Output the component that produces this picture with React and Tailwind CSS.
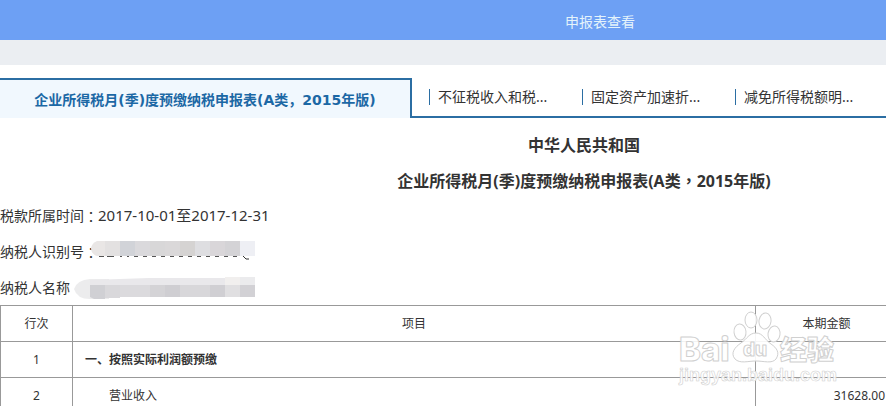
const OTHER_TABS = ['不征税收入和税...', '固定资产加速折...', '减免所得税额明...']

const ROWS = [
  { no: 1, item: '一、按照实际利润额预缴', amount: '', section: true },
  { no: 2, item: '营业收入', amount: '31628.00', section: false },
]

// full-width punctuation centred in its cell
function Mark({ children }) {
  return <span className="font-['Noto_Sans_CJK_TC',sans-serif]">{children}</span>
}

function MaskedNumber() {
  return (
    <svg viewBox="0 0 166 22" className="-ml-2 h-[22px] w-[166px]" role="img" aria-label="已隐藏">
      <path d="M7 0H16V15H7Q1 13 1 7Q2 2 7 0Z" fill="#e9e6e5" />
      <rect x="15" y="0" width="15" height="15" fill="#e3e1e1" />
      <rect x="30" y="0" width="15" height="15" fill="#d1d3d8" />
      <rect x="45" y="0" width="15" height="15" fill="#dad9dc" />
      <rect x="60" y="0" width="15" height="15" fill="#d8d7d8" />
      <rect x="75" y="0" width="15" height="15" fill="#dad8d9" />
      <rect x="90" y="0" width="15" height="15" fill="#d5d3d2" />
      <rect x="105" y="0" width="15" height="15" fill="#dedee1" />
      <rect x="120" y="0" width="15" height="15" fill="#d9d6d9" />
      <rect x="135" y="0" width="15" height="15" fill="#d4d3d6" />
      <rect x="150" y="0" width="15" height="15" fill="#eeeff4" />
      <path d="M9 15.500H14M17 15.500H24M30 15.500H32M37 15.500H39" stroke="#555" />
      <path d="M44 15.500H150" stroke="#555" strokeDasharray="4 5" />
      <path d="M153 15L156 18H159" fill="none" stroke="#333" />
    </svg>
  )
}

function MaskedName() {
  return (
    <svg viewBox="0 0 182 22" className="ml-1 h-[22px] w-[182px]" role="img" aria-label="已隐藏">
      <path d="M16 2H35V22H16Q3 22 0 12Q3 3 16 2Z" fill="#ececed" />
      <path d="M16 3L75 1H151V9H16Z" fill="#e9e8eb" />
      <rect x="151" y="0" width="15" height="9" fill="#f1efee" />
      <rect x="166" y="0" width="15" height="9" fill="#ebebed" />
      <path d="M16 8H31V22H20L16 20Z" fill="#d0d0d4" />
      <rect x="31" y="8" width="15" height="13" fill="#d9d8db" />
      <rect x="46" y="8" width="30" height="12" fill="#dbdadd" />
      <rect x="76" y="8" width="15" height="12" fill="#d4d3d6" />
      <rect x="91" y="8" width="15" height="12" fill="#cfced2" />
      <rect x="106" y="8" width="30" height="12" fill="#d8d7da" />
      <rect x="136" y="8" width="15" height="12" fill="#d0cfd3" />
      <rect x="151" y="8" width="15" height="12" fill="#e0dfe1" />
      <rect x="166" y="8" width="15" height="12" fill="#d2d1d5" />
    </svg>
  )
}

function Watermark() {
  return (
    <svg
      viewBox="0 0 166 84"
      className="pointer-events-none absolute top-[306px] left-[676px] h-[84px] w-[166px]"
      fill="#fff"
      fillOpacity="0.9"
      stroke="#d0d0d0"
      strokeWidth="1"
      strokeLinejoin="round"
      aria-hidden
    >
      <text x="3" y="55" fontSize="33" fontWeight="800" fontFamily="Inter">
        Bai
      </text>
      <ellipse cx="64" cy="26" rx="6" ry="8" transform="rotate(-6 64 26)" />
      <ellipse cx="75" cy="14" rx="6" ry="8" />
      <ellipse cx="89" cy="15" rx="6" ry="8" transform="rotate(8 89 15)" />
      <ellipse cx="98" cy="28" rx="6" ry="8" transform="rotate(8 98 28)" />
      <path d="M80 27C87 27 89 34 95 38C101 42 104 47 100 53C96 58 88 55 80 55C72 55 64 58 59 53C54 47 59 41 65 37C71 33 73 27 80 27Z" />
      <text x="67" y="50" fontSize="19" fontWeight="800" fontFamily="Inter">
        du
      </text>
      <text x="104" y="54" fontSize="27" fontWeight="900" fontFamily="Noto Sans CJK SC">
        经验
      </text>
      <text x="3" y="75" fontSize="18" fontWeight="700" fontFamily="Liberation Sans" strokeWidth="0.6">
        jingyan.baidu.com
      </text>
    </svg>
  )
}

export default function App() {
  return (
    <div className="relative h-screen overflow-hidden bg-white font-['Noto_Sans','Noto_Sans_CJK_SC',sans-serif] text-sm text-[#333]">
      <header className="flex h-10 min-w-[1200px] items-center justify-center bg-[#6da0f4] pt-1 text-[#e4f3fb]">
        <h1>申报表查看</h1>
      </header>
      <div className="h-[25px] bg-[#ebeef2]" />

      <main className="min-w-[1168px]">
        <nav className="mt-[13px] flex h-10">
          <button
            type="button"
            className="w-[412px] shrink-0 border-t-2 border-r-2 border-[#2b6ea3] bg-[#f1f8fe] pt-0.5 text-center font-['DejaVu_Sans','Noto_Sans_CJK_SC',sans-serif] font-bold text-[#1c68a5]"
          >
            企业所得税月(季)度预缴纳税申报表(A类，2015年版)
          </button>
          <div className="flex flex-1 items-center border-b-2 border-[#2b6ea3] pl-[17px]">
            {OTHER_TABS.map((tab) => (
              <button key={tab} type="button" className="flex w-[153px] items-center gap-2">
                <span className="h-4 w-px bg-[#2b6ea3]" />
                {tab}
              </button>
            ))}
          </div>
        </nav>

        <div className="pt-2.5 text-center text-base font-bold">
          <h2 className="h-[35px] leading-[35px]">中华人民共和国</h2>
          <h2 className="h-[35px] leading-[35px]">
            企业所得税月(季)度预缴纳税申报表(A类<Mark>，</Mark>2015年版)
          </h2>
        </div>

        <p className="flex h-9 items-center">
          税款所属时间<Mark>：</Mark>
          <span className="text-[15px]">2017-10-01至2017-12-31</span>
        </p>
        <p className="flex h-9 items-center">
          纳税人识别号<Mark>：</Mark>
          <MaskedNumber />
        </p>
        <p className="flex h-9 items-center">
          纳税人名称
          <MaskedName />
        </p>

        <table className="-mt-px w-[898px] table-fixed border-collapse text-xs">
          <colgroup>
            <col className="w-[72px]" />
            <col />
            <col className="w-[142px]" />
          </colgroup>
          <thead>
            <tr className="h-9">
              <th className="border border-[#999] font-normal">行次</th>
              <th className="border border-[#999] font-normal">项目</th>
              <th className="border border-[#999] font-normal">本期金额</th>
            </tr>
          </thead>
          <tbody>
            {ROWS.map((row) => (
              <tr key={row.no} className="h-9">
                <td className="border border-[#999] text-center">{row.no}</td>
                <td className={row.section ? 'border border-[#999] pl-3 font-bold' : 'border border-[#999] pl-9'}>
                  {row.item}
                </td>
                <td className="border border-[#999] pr-3 text-right">{row.amount}</td>
              </tr>
            ))}
          </tbody>
        </table>
      </main>

      <Watermark />
    </div>
  )
}
